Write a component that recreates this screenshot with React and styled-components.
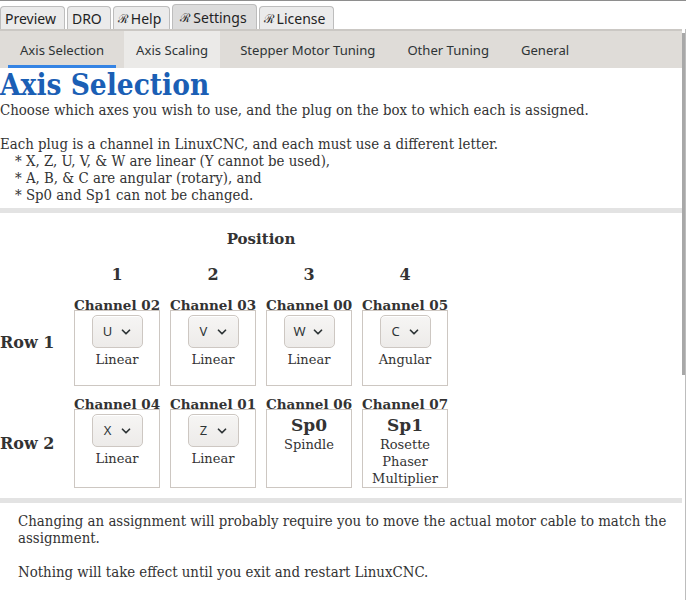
import React from 'react';
import styled, { createGlobalStyle } from 'styled-components';
import { ChevronDown } from 'lucide-react';

const GlobalStyle = createGlobalStyle`
  html, body {
    margin: 0;
    padding: 0;
    background: #ffffff;
  }
  body {
    font-family: "Noto Sans", "DejaVu Sans", sans-serif;
    color: #2e3436;
  }
`;

const serif = `"DejaVu Serif", "Liberation Serif", serif`;
const serifNarrow = `"DejaVu Serif Condensed", "DejaVu Serif", serif`;

const Window = styled.div`
  height: 600px;
  display: flex;
  flex-direction: column;
  border-top: 1px solid #8e8e8e;
  box-sizing: border-box;
  overflow: hidden;
`;

// top notebook (Preview / DRO / Help / Settings / License)
const TabStrip = styled.div`
  display: flex;
  align-items: flex-end;
  gap: 2px;
  height: 28px;
  flex: none;
  background: #ffffff;
`;

const Tab = styled.div`
  display: flex;
  align-items: center;
  gap: 3px;
  height: ${p => (p.$active ? 25 : 23)}px;
  padding: 0 ${p => (p.$active ? 9 : 8)}px 0 ${p => (p.$active ? 7 : 4)}px;
  box-sizing: border-box;
  background: ${p => (p.$active ? '#dcdcdc' : '#ebebeb')};
  border: 1px solid #bdbdbd;
  border-bottom: none;
  border-radius: 4px 4px 0 0;
  font-size: 14px;
  color: #1f2324;
`;

const Script = styled.span`
  font-family: ${serif};
  font-size: 12px;
`;

const Viewport = styled.div`
  position: relative;
  flex: 1;
  min-height: 0;
  display: flex;
`;

const ScrollArea = styled.div`
  flex: 1;
  overflow-y: auto;
  scrollbar-width: none;

  &::-webkit-scrollbar {
    display: none;
  }
`;

// overlay scrollbar drawn on top of the page, as the toolkit does
const ScrollTrack = styled.div`
  position: absolute;
  top: 0;
  right: 0;
  bottom: 0;
  width: 4px;
  background: #ffffff;
  box-shadow: inset -1px 0 #bdbdbd;
`;

const ScrollThumb = styled.div`
  position: absolute;
  top: 4px;
  right: 1px;
  width: 3px;
  height: 342px;
  background: rgba(0, 0, 0, 0.34);
`;

// inner notebook with the settings pages
const SubTabBar = styled.div`
  position: sticky;
  top: 0;
  display: flex;
  height: 39px;
  padding-left: 4px;
  box-sizing: border-box;
  background: #dfdcd8;
  border-top: 2px solid #cbc8c4;
`;

const SubTab = styled.div`
  display: flex;
  align-items: center;
  margin: 0 4px;
  padding: 0 12px;
  font-size: 13.1px;
  color: #2e3436;
  background: ${p => (p.$hover ? '#ebeae8' : 'transparent')};
  box-shadow: ${p => (p.$active ? 'inset 0 -3px #3584e4' : 'none')};
`;

const Heading = styled.h1`
  margin: 0;
  font-family: ${serifNarrow};
  font-size: 29.5px;
  line-height: 34px;
  font-weight: bold;
  color: #1b5fb5;
`;

const Prose = styled.div`
  padding: ${p => (p.$inset ? '10px 16px 0 18px' : '0')};
  font-family: ${serifNarrow};
  font-size: 14.85px;
  line-height: 17px;
  color: #333333;
`;

const Line = styled.div`
  min-height: 17px;
  padding-left: ${p => (p.$bullet ? 15 : 0)}px;
`;

const Rule = styled.div`
  height: 5px;
  margin-top: ${p => p.$top || 0}px;
  background: #e3e3e3;
`;

const Grid = styled.div`
  display: grid;
  grid-template-columns: 69px repeat(4, 96px);
  row-gap: 12px;
  padding: 16px 0 10px;
  font-family: ${serif};
  color: #333333;
`;

const Caption = styled.div`
  grid-column: ${p => (p.$span ? '2 / span 4' : 'auto')};
  text-align: center;
  font-weight: bold;
  font-size: ${p => p.$size}px;
  line-height: ${p => p.$line}px;
`;

const RowLabel = styled.div`
  grid-column: 1;
  display: flex;
  align-items: center;
  font-weight: bold;
  font-size: 16px;
`;

const Cell = styled.div`
  display: flex;
  flex-direction: column;
  align-items: center;
`;

const ChannelName = styled.div`
  font-weight: bold;
  font-size: 13.5px;
  line-height: 12px;
  margin-bottom: -1px;
  white-space: nowrap;
`;

const Box = styled.div`
  flex: 1;
  width: 86px;
  min-height: 76px;
  box-sizing: border-box;
  padding: 4px 0 0;
  display: flex;
  flex-direction: column;
  align-items: center;
  border: 1px solid #cdc7c2;
  text-align: center;
  font-size: 13px;
  line-height: 17px;
`;

const Kind = styled.div`
  white-space: pre-line;
`;

const Select = styled.div`
  display: flex;
  align-items: center;
  justify-content: center;
  gap: 5px;
  width: 51px;
  height: 33px;
  box-sizing: border-box;
  border: 1px solid #cdc7c2;
  border-radius: 5px;
  background: linear-gradient(#f6f5f4, #edebe9);
  box-shadow: inset 0 1px #ffffff;
  margin-bottom: 3px;
  font-family: "Noto Sans", sans-serif;
  font-size: 13px;
  color: #2e3436;
`;

const Letter = styled.span`
  width: 13px;
  text-align: center;
`;

const Fixed = styled.div`
  font-weight: bold;
  font-size: 17px;
  line-height: 22px;
`;

const Footer = styled.div`
  padding-bottom: 380px;
`;

const rows = [
  {
    name: 'Row 1',
    cells: [
      { ch: '02', axis: 'U', kind: 'Linear' },
      { ch: '03', axis: 'V', kind: 'Linear' },
      { ch: '00', axis: 'W', kind: 'Linear' },
      { ch: '05', axis: 'C', kind: 'Angular' },
    ],
  },
  {
    name: 'Row 2',
    cells: [
      { ch: '04', axis: 'X', kind: 'Linear' },
      { ch: '01', axis: 'Z', kind: 'Linear' },
      { ch: '06', spindle: 'Sp0', kind: 'Spindle' },
      { ch: '07', spindle: 'Sp1', kind: 'Rosette\nPhaser\nMultiplier' },
    ],
  },
];

const mainTabs = [
  { label: 'Preview' },
  { label: 'DRO' },
  { label: 'Help', script: true },
  { label: 'Settings', script: true, active: true },
  { label: 'License', script: true },
];

const pages = ['Axis Selection', 'Axis Scaling', 'Stepper Motor Tuning', 'Other Tuning', 'General'];

const intro = [
  { text: 'Choose which axes you wish to use, and the plug on the box to which each is assigned.' },
  { text: '' },
  { text: 'Each plug is a channel in LinuxCNC, and each must use a different letter.' },
  { text: '* X, Z, U, V, & W are linear (Y cannot be used),', bullet: true },
  { text: '* A, B, & C are angular (rotary), and', bullet: true },
  { text: '* Sp0 and Sp1 can not be changed.', bullet: true },
];

const ChannelCell = ({ ch, axis, spindle, kind }) => (
  <Cell>
    <ChannelName>Channel {ch}</ChannelName>
    <Box>
      {axis ? (
        <Select>
          <Letter>{axis}</Letter>
          <ChevronDown size={14} strokeWidth={3} />
        </Select>
      ) : (
        <Fixed>{spindle}</Fixed>
      )}
      <Kind>{kind}</Kind>
    </Box>
  </Cell>
);

export default function App() {
  return (
    <>
      <GlobalStyle />
      <Window>
        <TabStrip>
          {mainTabs.map(t => (
            <Tab key={t.label} $active={t.active}>
              {t.script && <Script>ℛ</Script>}
              {t.label}
            </Tab>
          ))}
        </TabStrip>
        <Viewport>
          <ScrollArea>
            <SubTabBar>
              {pages.map((p, i) => (
                <SubTab key={p} $active={i === 0} $hover={i === 1}>{p}</SubTab>
              ))}
            </SubTabBar>

            <Heading>Axis Selection</Heading>
            <Prose>
              {intro.map((l, i) => (
                <Line key={i} $bullet={l.bullet}>{l.text}</Line>
              ))}
            </Prose>
            <Rule $top={4} />

            <Grid>
              <div />
              <Caption $span $size={15} $line={21}>Position</Caption>
              <div />
              {[1, 2, 3, 4].map(n => (
                <Caption key={n} $size={16} $line={25}>{n}</Caption>
              ))}
              {rows.map(r => (
                <React.Fragment key={r.name}>
                  <RowLabel>{r.name}</RowLabel>
                  {r.cells.map(c => <ChannelCell key={c.ch} {...c} />)}
                </React.Fragment>
              ))}
            </Grid>

            <Rule />
            <Footer>
              <Prose $inset>
                <Line>
                  Changing an assignment will probably require you to move the actual motor cable to match the assignment.
                </Line>
                <Line />
                <Line>Nothing will take effect until you exit and restart LinuxCNC.</Line>
              </Prose>
            </Footer>
          </ScrollArea>
          <ScrollTrack>
            <ScrollThumb />
          </ScrollTrack>
        </Viewport>
      </Window>
    </>
  );
}
